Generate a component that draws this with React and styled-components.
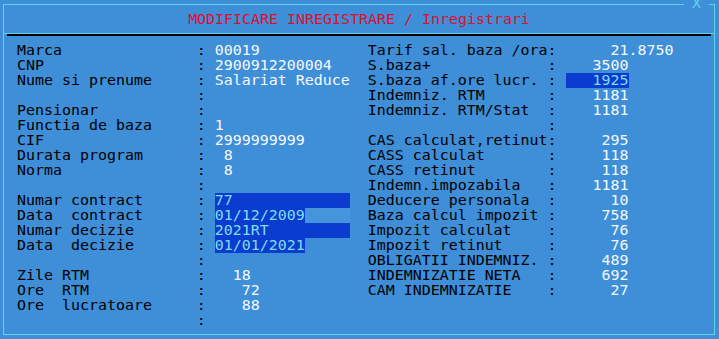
import React from "react";
import styled, { createGlobalStyle } from "styled-components";

const BG = "#3e8ed8";
const FRAME = "#5fd3ea";
const HI = "#0b3cd0";
const HI_TEXT = "#80dcf2";

const Global = createGlobalStyle`
  html, body { margin: 0; padding: 0; background: ${BG}; }
  #root { width: 719px; height: 339px; }
`;

const Screen = styled.div`
  width: 719px;
  height: 339px;
  box-sizing: border-box;
  padding: 4px 0 0 3px;
  background: ${BG};
  overflow: hidden;
  font-family: "DejaVu Sans Mono", "Liberation Mono", monospace;
  font-size: 14.95px;
  line-height: 15px;
`;

const Frame = styled.div`
  position: relative;
  width: 712px;
  height: 331px;
  box-sizing: border-box;
  border: 1px solid ${FRAME};
`;

const CloseMark = styled.span`
  position: absolute;
  top: -9px;
  left: 680px;
  width: 25px;
  height: 15px;
  background: ${BG};
  color: ${FRAME};
  text-align: center;
  line-height: 15px;
`;

const Title = styled.div`
  margin-top: 7px;
  height: 15px;
  text-align: center;
  color: #dc1030;
  white-space: pre;
`;

const Divider = styled.div`
  margin-top: 6px;
  height: 2px;
  border-top: 1px solid ${FRAME};
  display: flex;
  padding: 0 3px;
`;

const Rule = styled.div`
  flex: 1;
  background: #000;
`;

const Body = styled.div`
  margin-top: 7px;
  padding-left: 13px;
  display: grid;
  grid-template-columns: 39ch auto;
`;

const Column = styled.div`
  display: flex;
  flex-direction: column;
`;

const Row = styled.div`
  display: flex;
  height: 15px;
  white-space: pre;
`;

const Label = styled.span`
  width: 20ch;
  color: #000;
`;

const Colon = styled.span`
  width: 2ch;
  color: #000;
`;

const Value = styled.span`
  width: ${(p) => p.$w || "auto"};
  text-align: ${(p) => (p.$right ? "right" : "left")};
  color: ${(p) => (p.$hi ? HI_TEXT : "#f6f9ff")};
  background: ${(p) => (p.$hi ? HI : "transparent")};
`;

const Trail = styled.span`
  width: ${(p) => p.$w};
  background: #4695dc;
`;

const left = [
  { l: "Marca", v: "00019" },
  { l: "CNP", v: "2900912200004" },
  { l: "Nume si prenume", v: "Salariat Reduce" },
  { l: "" },
  { l: "Pensionar" },
  { l: "Functia de baza", v: "1" },
  { l: "CIF", v: "2999999999" },
  { l: "Durata program", v: " 8" },
  { l: "Norma", v: " 8" },
  { l: "" },
  { l: "Numar contract", v: "77", hi: true, w: "15ch" },
  { l: "Data  contract", v: "01/12/2009", hi: true, w: "10ch", trail: "5ch" },
  { l: "Numar decizie", v: "2021RT", hi: true, w: "15ch" },
  { l: "Data  decizie", v: "01/01/2021", hi: true, w: "10ch" },
  { l: "" },
  { l: "Zile RTM", v: "  18" },
  { l: "Ore  RTM", v: "   72" },
  { l: "Ore  lucratoare", v: "   88" },
  { l: "" },
];

const right = [
  { l: "Tarif sal. baza /ora", v: "21.8750", w: "12ch" },
  { l: "S.baza+", v: "3500" },
  { l: "S.baza af.ore lucr.", v: "1925", hi: true },
  { l: "Indemniz. RTM", v: "1181" },
  { l: "Indemniz. RTM/Stat", v: "1181" },
  { l: "" },
  { l: "CAS calculat,retinut", v: "295" },
  { l: "CASS calculat", v: "118" },
  { l: "CASS retinut", v: "118" },
  { l: "Indemn.impozabila", v: "1181" },
  { l: "Deducere personala", v: "10" },
  { l: "Baza calcul impozit", v: "758" },
  { l: "Impozit calculat", v: "76" },
  { l: "Impozit retinut", v: "76" },
  { l: "OBLIGATII INDEMNIZ.", v: "489" },
  { l: "INDEMNIZATIE NETA", v: "692" },
  { l: "CAM INDEMNIZATIE", v: "27" },
];

export default function App() {
  return (
    <>
      <Global />
      <Screen>
        <Frame>
          <CloseMark>X</CloseMark>
          <Title>MODIFICARE INREGISTRARE / Inregistrari</Title>
          <Divider>
            <Rule />
          </Divider>
          <Body>
            <Column>
              {left.map((r, i) => (
                <Row key={i}>
                  <Label>{r.l}</Label>
                  <Colon>:</Colon>
                  {r.v !== undefined && (
                    <Value $hi={r.hi} $w={r.w}>
                      {r.v}
                    </Value>
                  )}
                  {r.trail && <Trail $w={r.trail} />}
                </Row>
              ))}
            </Column>
            <Column>
              {right.map((r, i) => (
                <Row key={i}>
                  <Label>{r.l}</Label>
                  <Colon>:</Colon>
                  {r.v !== undefined && (
                    <Value $right $hi={r.hi} $w={r.w || "7ch"}>
                      {r.v}
                    </Value>
                  )}
                </Row>
              ))}
            </Column>
          </Body>
        </Frame>
      </Screen>
    </>
  );
}
